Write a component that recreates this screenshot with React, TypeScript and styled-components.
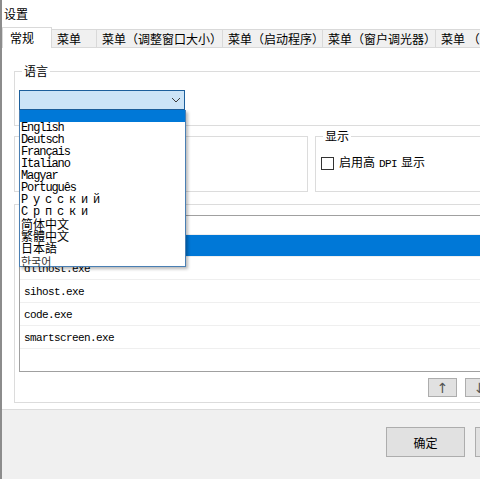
import * as React from "react"
import styled, { createGlobalStyle } from "styled-components"

const GlobalStyle = createGlobalStyle`
  html, body {
    margin: 0;
    padding: 0;
    background: #fff;
  }
  body {
    font-family: "Noto Sans CJK SC", "Liberation Sans", sans-serif;
    font-size: 12px;
    color: #000;
  }
`

const MONO = `"Liberation Mono", "Noto Sans CJK SC", monospace`

const tabs = [
  { label: "常规", w: 50 },
  { label: "菜单", w: 46 },
  { label: "菜单（调整窗口大小）", w: 127 },
  { label: "菜单（启动程序）", w: 101 },
  { label: "菜单（窗户调光器）", w: 114 },
  { label: "菜单 （其他）", w: 80 },
]

type Script = "latin" | "wide" | "cjk" | "kr"

const languages: { label: string; script: Script }[] = [
  { label: "English", script: "latin" },
  { label: "Deutsch", script: "latin" },
  { label: "Français", script: "latin" },
  { label: "Italiano", script: "latin" },
  { label: "Magyar", script: "latin" },
  { label: "Português", script: "latin" },
  { label: "Русский", script: "wide" },
  { label: "Српски", script: "wide" },
  { label: "简体中文", script: "cjk" },
  { label: "繁體中文", script: "cjk" },
  { label: "日本語", script: "cjk" },
  { label: "한국어", script: "kr" },
]

const processes = ["", "", "dllhost.exe", "sihost.exe", "code.exe", "smartscreen.exe", ""]

const Window = styled.div`
  width: 480px;
  height: 479px;
  box-sizing: border-box;
  overflow: hidden;
  border-left: 2px solid #8c8c8c;
  display: flex;
  flex-direction: column;
  background: #fff;
`

const TitleBar = styled.div`
  height: 27px;
  flex: none;
  padding-left: 2px;
  display: flex;
  align-items: center;
  font-size: 12px;
  line-height: 14px;
`

const TabStrip = styled.div`
  height: 20px;
  flex: none;
  display: flex;
  align-items: flex-end;
  border-bottom: 1px solid #d9d9d9;
`

const Tab = styled.div<{ $w: number; $active?: boolean }>`
  box-sizing: border-box;
  flex: none;
  width: ${(p) => p.$w}px;
  height: ${(p) => (p.$active ? 21 : 18)}px;
  margin-bottom: ${(p) => (p.$active ? -1 : 0)}px;
  margin-right: -1px;
  padding-left: ${(p) => (p.$active ? 7 : 5)}px;
  display: flex;
  align-items: center;
  white-space: nowrap;
  overflow: hidden;
  border: 1px solid #d9d9d9;
  border-bottom: none;
  background: ${(p) => (p.$active ? "#fff" : "#f0f0f0")};
  position: relative;
  z-index: ${(p) => (p.$active ? 1 : 0)};
  font-size: 12px;
  line-height: 14px;
`

const Panel = styled.div`
  flex: 1;
  padding: 15px 0 6px 12px;
  border-bottom: 1px solid #dcdcdc;
  overflow: hidden;
`

const Column = styled.div`
  width: 490px;
  display: flex;
  flex-direction: column;
`

const Group = styled.fieldset<{ $mt?: number; $w?: number }>`
  box-sizing: border-box;
  margin: ${(p) => p.$mt ?? 0}px 0 0 0;
  min-width: 0;
  ${(p) => (p.$w ? `width: ${p.$w}px; flex: none;` : "flex: 1;")}
  border: 1px solid #dcdcdc;
  padding: 11px 4px 15px 4px;
`

const Legend = styled.legend`
  margin-left: 3px;
  padding: 0 2px;
  font-size: 12px;
  line-height: 16px;
`

const Row = styled.div`
  display: flex;
  gap: 7px;
  margin-top: 2px;
`

const SideGroup = styled(Group)`
  height: 64px;
  padding: 11px 4px 0 4px;
`

const ComboWrap = styled.div`
  position: relative;
  width: 166px;
  z-index: 5;
`

const Combo = styled.div`
  box-sizing: border-box;
  height: 20px;
  background: #cce4f7;
  border: 1px solid #1c5f9c;
  display: flex;
  align-items: center;
  justify-content: flex-end;
  padding-right: 3px;
`

const Chevron = () => (
  <svg width="10" height="6" viewBox="0 0 10 6">
    <path d="M1 1 L5 5 L9 1" fill="none" stroke="#3c3c3c" strokeWidth="1" />
  </svg>
)

const DropList = styled.div`
  position: absolute;
  top: 100%;
  left: 0;
  width: 167px;
  box-sizing: border-box;
  background: #fff;
  border: 1px solid #4a7fb3;
  border-top: none;
  box-shadow: 2px 2px 3px rgba(0, 0, 0, 0.28);
`

const DropItem = styled.div<{ $script?: Script; $selected?: boolean }>`
  height: 12px;
  padding-left: 1px;
  white-space: nowrap;
  overflow: visible;
  background: ${(p) => (p.$selected ? "#0078d7" : "transparent")};
  color: ${(p) => (p.$script === "kr" ? "#333" : "#000")};
  line-height: 12px;
  ${(p) =>
    p.$script === "latin"
      ? `font-family: ${MONO}; font-size: 12px; letter-spacing: -1.1px;`
      : p.$script === "wide"
      ? `font-family: ${MONO}; font-size: 12px; letter-spacing: 4.8px;`
      : p.$script === "kr"
      ? `font-family: "Noto Sans CJK KR", sans-serif; font-size: 11px; padding-top: 1px; box-sizing: border-box;`
      : `font-family: "Noto Sans CJK SC", sans-serif; font-size: 12px;`}
`

const CheckLine = styled.label`
  display: flex;
  align-items: center;
  gap: 5px;
  padding-left: 1px;
  font-size: 12px;
  line-height: 14px;
`

const CheckBox = styled.span`
  box-sizing: border-box;
  width: 13px;
  height: 13px;
  border: 1px solid #333;
  background: #fff;
  flex: none;
`

const MonoText = styled.span`
  font-family: ${MONO};
  font-size: 11px;
  letter-spacing: -0.6px;
  margin: 0 4px;
`

const ListGroup = styled(Group)`
  height: 207px;
  padding: 3px 9px 5px 4px;
  display: flex;
  flex-direction: column;
`

const ListBox = styled.div`
  box-sizing: border-box;
  height: 157px;
  border: 1px solid #a0a0a0;
  overflow: hidden;
`

const ListRow = styled.div<{ $selected?: boolean }>`
  box-sizing: border-box;
  height: 23px;
  padding: 2px 0 0 4px;
  display: flex;
  align-items: center;
  border-bottom: 1px solid #efefef;
  background: ${(p) => (p.$selected ? "#0078d7" : "#fff")};
  color: ${(p) => (p.$selected ? "#fff" : "#000")};
  font-family: ${MONO};
  font-size: 11px;
  letter-spacing: -0.6px;

  &:first-child {
    height: 19px;
  }
  &:nth-child(2) {
    height: 22px;
  }
`

const MoveRow = styled.div`
  display: flex;
  justify-content: flex-end;
  gap: 8px;
  margin-top: 6px;
`

const SmallButton = styled.button`
  box-sizing: border-box;
  width: 29px;
  height: 19px;
  padding: 0;
  border: 1px solid #adadad;
  background: #e1e1e1;
  color: #555;
  font-family: "DejaVu Sans", sans-serif;
  font-size: 14px;
  line-height: 16px;
`

const Footer = styled.div`
  height: 69px;
  flex: none;
  box-sizing: border-box;
  background: #f0f0f0;
  display: flex;
  justify-content: flex-end;
  align-items: flex-start;
  gap: 10px;
  padding-top: 17px;
  margin-right: -74px;
`

const DialogButton = styled.button`
  box-sizing: border-box;
  width: 79px;
  height: 30px;
  border: 1px solid #adadad;
  background: #e1e1e1;
  font-family: "Noto Sans CJK SC", sans-serif;
  font-size: 12px;
  color: #000;
  padding: 0;
`

export default function App() {
  return (
    <>
      <GlobalStyle />
      <Window>
        <TitleBar>设置</TitleBar>
        <TabStrip>
          {tabs.map((t, i) => (
            <Tab key={t.label} $w={t.w} $active={i === 0}>
              {t.label}
            </Tab>
          ))}
        </TabStrip>
        <Panel>
          <Column>
            <Group>
              <Legend>语言</Legend>
              <ComboWrap>
                <Combo>
                  <Chevron />
                </Combo>
                <DropList>
                  <DropItem $selected />
                  {languages.map((l) => (
                    <DropItem key={l.label} $script={l.script}>
                      {l.label}
                    </DropItem>
                  ))}
                </DropList>
              </ComboWrap>
            </Group>
            <Row>
              <SideGroup $w={294}>
                <Legend>外观</Legend>
              </SideGroup>
              <SideGroup>
                <Legend>显示</Legend>
                <CheckLine>
                  <CheckBox />
                  <span>
                    启用高<MonoText>DPI</MonoText>显示
                  </span>
                </CheckLine>
              </SideGroup>
            </Row>
            <ListGroup $mt={4}>
              <Legend>排除</Legend>
              <ListBox>
                {processes.map((p, i) => (
                  <ListRow key={i} $selected={i === 1}>
                    {p}
                  </ListRow>
                ))}
              </ListBox>
              <MoveRow>
                <SmallButton>↑</SmallButton>
                <SmallButton>↓</SmallButton>
              </MoveRow>
            </ListGroup>
          </Column>
        </Panel>
        <Footer>
          <DialogButton>确定</DialogButton>
          <DialogButton>取消</DialogButton>
        </Footer>
      </Window>
    </>
  )
}
